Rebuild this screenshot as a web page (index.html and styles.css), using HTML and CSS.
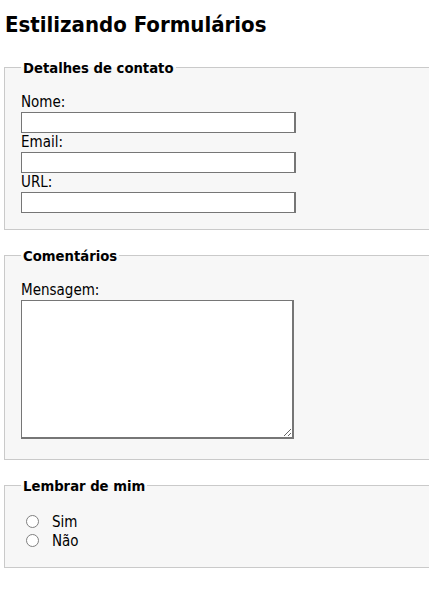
FILE: index.html
```html
<!DOCTYPE html>
<html lang="pt-BR">
<head>
<meta charset="utf-8">
<title>Estilizando Formulários</title>
<link rel="stylesheet" href="styles.css">
</head>
<body>
<div class="page">
  <h1 class="title">Estilizando Formulários</h1>
  <form class="form">
    <fieldset class="group">
      <legend class="group-title">Detalhes de contato</legend>
      <label class="field-label" for="nome">Nome:</label>
      <input class="text-input" type="text" id="nome">
      <label class="field-label" for="email">Email:</label>
      <input class="text-input" type="text" id="email">
      <label class="field-label" for="url">URL:</label>
      <input class="text-input" type="text" id="url">
    </fieldset>
    <fieldset class="group">
      <legend class="group-title">Comentários</legend>
      <label class="field-label" for="msg">Mensagem:</label>
      <textarea class="text-area" id="msg"></textarea>
    </fieldset>
    <fieldset class="group group-radios">
      <legend class="group-title">Lembrar de mim</legend>
      <label class="radio-row"><input class="radio" type="radio" name="lembrar"><span>Sim</span></label>
      <label class="radio-row"><input class="radio" type="radio" name="lembrar"><span>Não</span></label>
    </fieldset>
  </form>
</div>
</body>
</html>
```

FILE: styles.css
```css
html, body {
  overflow: hidden;
}
body {
  margin: 0;
  background: #ffffff;
  color: #000000;
  font-family: "DejaVu Sans Condensed", "DejaVu Sans", sans-serif;
}
.page {
  width: 470px;
  padding: 0 0 0 4px;
}
.title {
  margin: 0;
  padding-top: 12px;
  padding-left: 1px;
  font-size: 22px;
  line-height: 25px;
  font-weight: bold;
}
.form {
  display: flex;
  flex-direction: column;
  gap: 17px;
  margin-top: 22px;
}
.group {
  margin: 0;
  padding: 17px 16px 16px 16px;
  border: 1px solid #cacaca;
  background: #f7f7f7;
  display: flex;
  flex-direction: column;
  align-items: flex-start;
}
.group-title {
  padding: 0 2px;
  margin-left: 0;
  font-size: 14.7px;
  line-height: 17px;
  font-weight: bold;
}
.field-label {
  display: block;
  font-size: 15px;
  line-height: 19px;
}
.text-input {
  box-sizing: border-box;
  width: 275px;
  height: 21px;
  margin: 0;
  padding: 1px 2px;
  border: 1px solid #767676;
  border-right-width: 2px;
  background: #ffffff;
  font: inherit;
  font-size: 13px;
}
.text-area {
  box-sizing: border-box;
  display: block;
  width: 273px;
  height: 139px;
  margin: 0 0 4px 0;
  padding: 2px;
  border: 1px solid #767676;
  border-right-width: 2px;
  border-bottom-width: 2px;
  background: #ffffff;
  font: inherit;
  font-size: 13px;
}
.group-radios {
  padding-top: 18px;
  padding-bottom: 17px;
}
.radio-row {
  display: flex;
  align-items: center;
  height: 19px;
  font-size: 15px;
}
.radio {
  appearance: none;
  -webkit-appearance: none;
  box-sizing: border-box;
  width: 13px;
  height: 13px;
  margin: 0 13px 0 5px;
  border: 1px solid #808080;
  border-radius: 50%;
  background: #ffffff;
}
```
